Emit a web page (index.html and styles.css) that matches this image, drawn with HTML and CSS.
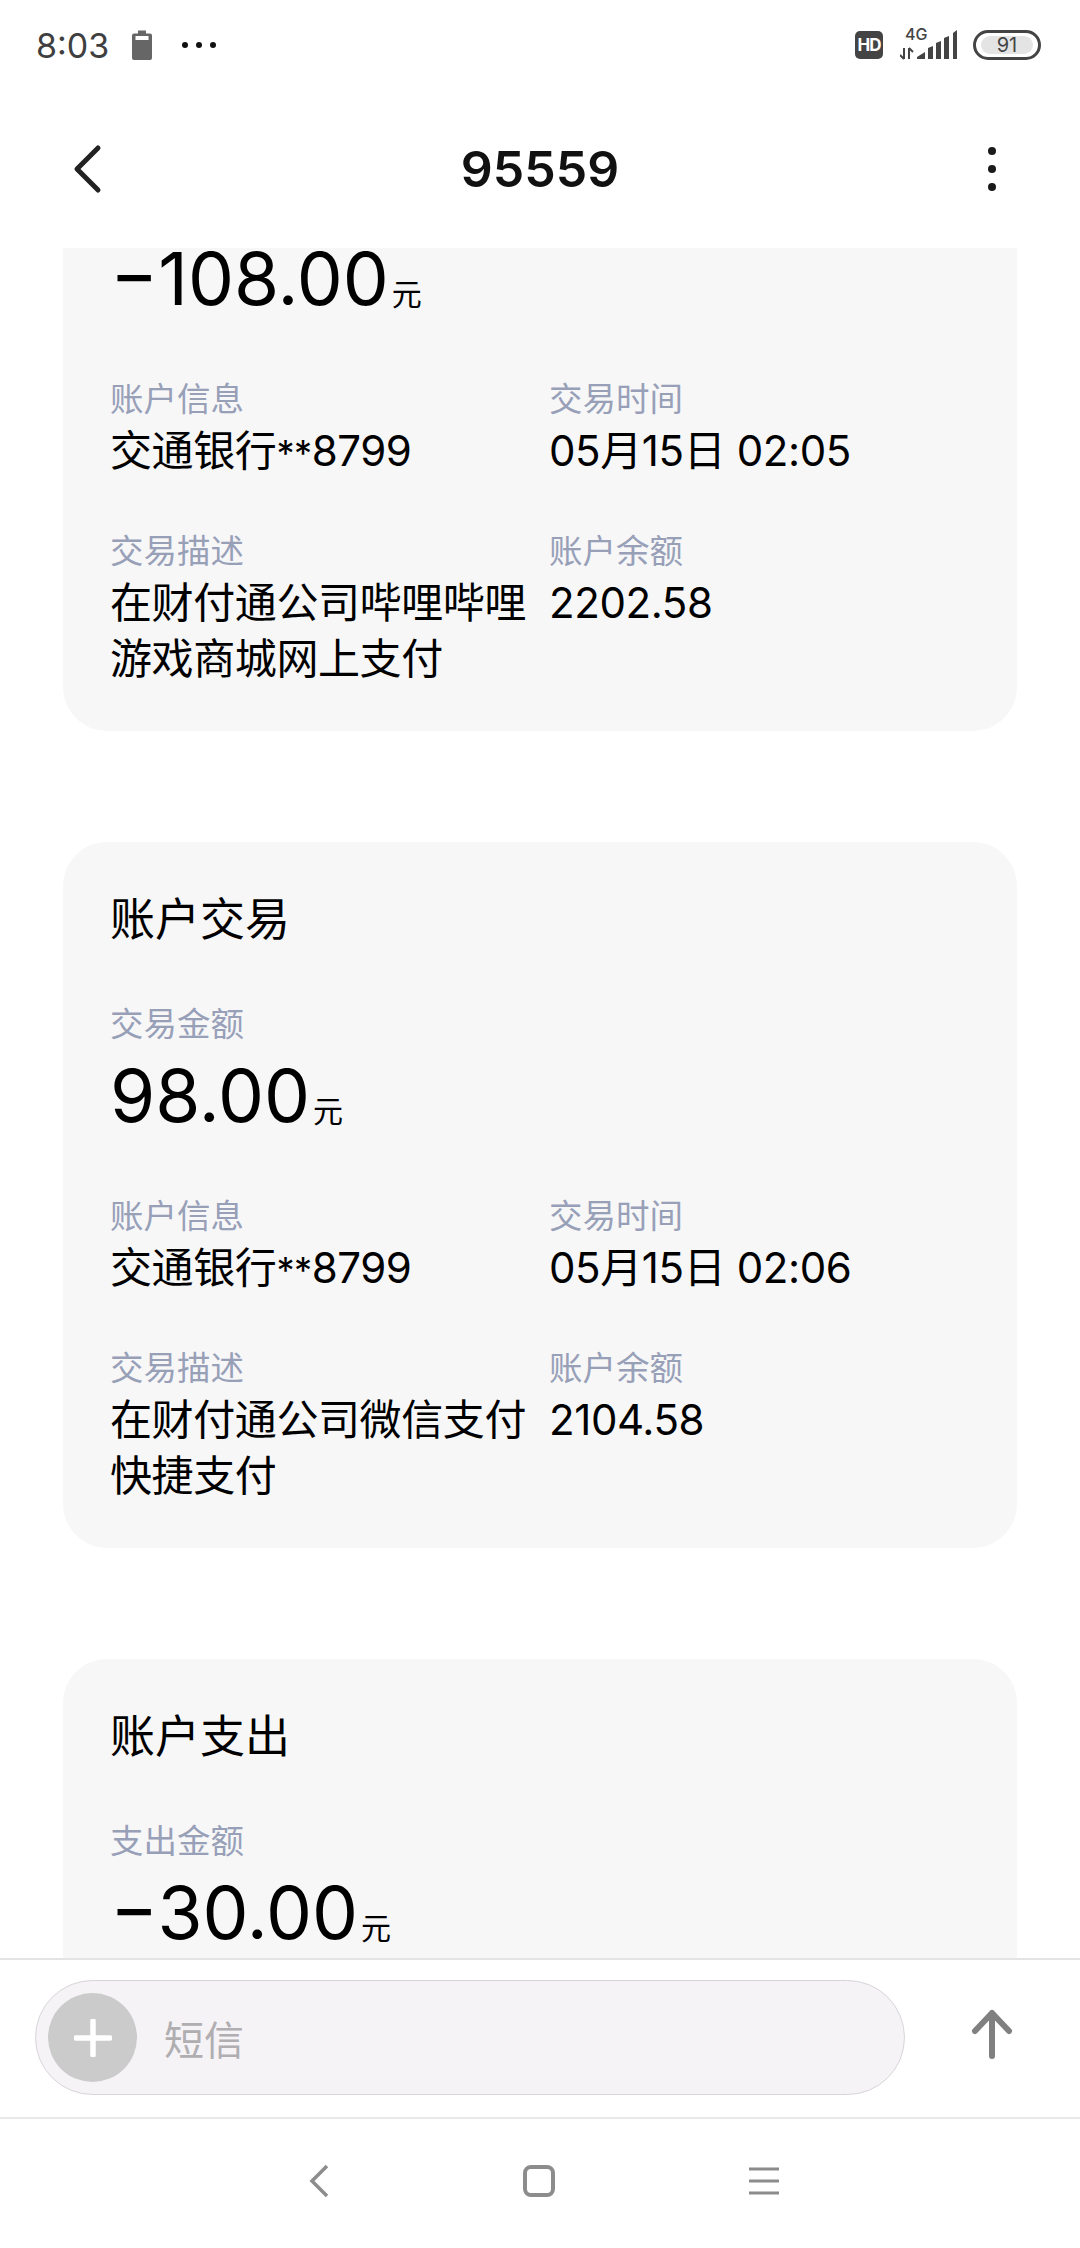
FILE: index.html
```html
<!DOCTYPE html>
<html>
  <head>
    <title>95559</title>
    <link rel="stylesheet" href="styles.css">
  </head>
  <body>
    <div class="app">
      <div class="statusbar">
        <div class="status-left">
          <span class="clock">8:03</span>
          <svg class="ic-charge" width="20" height="30" viewBox="0 0 20 30">
            <path d="M6 0.5h8v3h4a2 2 0 0 1 2 2V28a2 2 0 0 1-2 2H2a2 2 0 0 1-2-2V5.5a2 2 0 0 1 2-2h4z" fill="#666"/>
            <rect x="3.5" y="6" width="13" height="4" fill="#fff"/>
          </svg>
          <svg class="ic-more" width="36" height="8" viewBox="0 0 36 8">
            <circle cx="4" cy="4" r="3" fill="#111"/>
            <circle cx="18" cy="4" r="3" fill="#111"/>
            <circle cx="32" cy="4" r="3" fill="#111"/>
          </svg>
        </div>
        <div class="status-right">
          <span class="hd">HD</span>
          <svg class="ic-signal" width="58" height="42" viewBox="0 0 58 42">
            <text x="5" y="16" class="net">4G</text>
            <g transform="translate(0 5)">
              <path d="M4 19v11M4 30l-4-4M9 30V19M9 19l4 4" stroke="#444" stroke-width="2" fill="none"/>
              <path d="M17 30v-2l8-5v7zM28 30V19l5-2v13zM36 30V14l5-2v18zM44 30V9l5-2v23zM53 30V4l4-3v29z" fill="#444"/>
            </g>
          </svg>
          <span class="battery"><span class="battery-level">91</span></span>
        </div>
      </div>

      <div class="topbar">
        <svg class="ic-back" width="30" height="50" viewBox="0 0 30 50">
          <path d="M26 4 5 25l21 21" fill="none" stroke="#222" stroke-width="5" stroke-linecap="round" stroke-linejoin="round"/>
        </svg>
        <div class="title">95559</div>
        <svg class="ic-menu" width="10" height="46" viewBox="0 0 10 46">
          <circle cx="5" cy="5" r="4" fill="#1a1a1a"/>
          <circle cx="5" cy="23" r="4" fill="#1a1a1a"/>
          <circle cx="5" cy="41" r="4" fill="#1a1a1a"/>
        </svg>
      </div>

      <div class="messages">
        <div class="card card-first">
          <div class="amount">−108.00<span class="unit">元</span></div>
          <div class="details">
            <div>
              <div class="label">账户信息</div>
              <div class="value">交通银行<span class="mask">**</span>8799</div>
            </div>
            <div>
              <div class="label">交易时间</div>
              <div class="value">05月15日 02:05</div>
            </div>
            <div>
              <div class="label">交易描述</div>
              <div class="value">在财付通公司哔哩哔哩游戏商城网上支付</div>
            </div>
            <div>
              <div class="label">账户余额</div>
              <div class="value">2202.58</div>
            </div>
          </div>
        </div>

        <div class="card">
          <div class="card-title">账户交易</div>
          <div class="label amount-label">交易金额</div>
          <div class="amount">98.00<span class="unit">元</span></div>
          <div class="details">
            <div>
              <div class="label">账户信息</div>
              <div class="value">交通银行<span class="mask">**</span>8799</div>
            </div>
            <div>
              <div class="label">交易时间</div>
              <div class="value">05月15日 02:06</div>
            </div>
            <div>
              <div class="label">交易描述</div>
              <div class="value">在财付通公司微信支付快捷支付</div>
            </div>
            <div>
              <div class="label">账户余额</div>
              <div class="value">2104.58</div>
            </div>
          </div>
        </div>

        <div class="card card-last">
          <div class="card-title">账户支出</div>
          <div class="label amount-label">支出金额</div>
          <div class="amount">−30.00<span class="unit">元</span></div>
        </div>
      </div>

      <div class="composer">
        <div class="input">
          <span class="plus">
            <svg width="38" height="38" viewBox="0 0 38 38">
              <path d="M19 2v34M2 19h34" stroke="#fff" stroke-width="5.5" stroke-linecap="round"/>
            </svg>
          </span>
          <span class="placeholder">短信</span>
        </div>
        <svg class="ic-send" width="44" height="50" viewBox="0 0 44 50">
          <path d="M22 47V4M5 22 22 4l17 18" fill="none" stroke="#808080" stroke-width="6" stroke-linecap="round" stroke-linejoin="round"/>
        </svg>
      </div>

      <div class="navbar">
        <svg width="20" height="34" viewBox="0 0 20 34">
          <path d="M18 2 3 17l15 15" fill="none" stroke="#8c8c8c" stroke-width="3.5"/>
        </svg>
        <svg width="32" height="32" viewBox="0 0 32 32">
          <rect x="2" y="2" width="28" height="28" rx="6" fill="none" stroke="#8c8c8c" stroke-width="4"/>
        </svg>
        <svg width="30" height="28" viewBox="0 0 30 28">
          <path d="M0 2h30M0 14h30M0 26h30" fill="none" stroke="#8c8c8c" stroke-width="3"/>
        </svg>
      </div>
    </div>
  </body>
</html>
```

FILE: styles.css
```css
html, body {margin: 0; padding: 0; background: #fff;}
body {font-family: Inter, "Noto Sans CJK SC", sans-serif; color: #000;}

.app {width: 1080px; height: 2248px; display: flex; flex-direction: column; overflow: hidden;}

/* status bar */
.statusbar {height: 90px; flex: none; display: flex; justify-content: space-between; align-items: center; padding: 0 39px 0 36px; box-sizing: border-box;}
.status-left {display: flex; align-items: center;}
.status-right {display: flex; align-items: center;}
.clock {font-size: 34px; color: #3f3f3f; width: 96px;}
.ic-more {margin-left: 29px;}
.hd {width: 28px; height: 28px; border-radius: 5px; background: #444; color: #fff; font-size: 17px; font-weight: 700; text-align: center; line-height: 28px; letter-spacing: -1px;}
.ic-signal {margin-left: 17px;}
.net {font-size: 16px; font-weight: 500; fill: #444;}
.battery {margin-left: 15px; width: 68px; height: 30px; box-sizing: border-box; border: 3px solid #444; border-radius: 15px; padding: 3px 5px; display: flex;}
.battery-level {flex: 1; background: #e4e4e4; border-radius: 9px; font-size: 20px; line-height: 18px; text-align: center; color: #444;}

/* title bar */
.topbar {height: 158px; flex: none; display: grid; grid-template-columns: 1fr auto 1fr; align-items: center; padding: 0 72px; box-sizing: border-box;}
.title {font-size: 50px; font-weight: 600; color: #111;}
.ic-menu {justify-self: end; margin-right: 11px;}

/* messages */
.messages {flex: 1; min-height: 0; overflow: hidden;}
.card {margin: 0 63px 111px; padding: 44px 47px; background: #f7f7f8; border-radius: 44px;}
.card-first {margin-top: -223px; padding-top: 224px;}
.card-last {padding-bottom: 200px;}
.card-title {font-size: 45px; line-height: 68px;}
.label {font-size: 33.5px; line-height: 44px; color: #98a0b8;}
.amount-label {margin-top: 48px;}
.amount {font-size: 73px; line-height: 60px; margin-top: 20px;}
.card-first .amount {margin-top: 0;}
.unit {font-size: 30px; line-height: 1; margin-left: 3px;}
.details {display: grid; grid-template-columns: 439px 1fr; row-gap: 50px; margin-top: 68px;}
.value {font-size: 42px; line-height: 56px; margin-top: 2px; letter-spacing: -0.4px;}
.mask {font-size: 36px; line-height: 1;}

/* input */
.composer {height: 161px; flex: none; box-sizing: border-box; border-top: 2px solid #e4e4e6; border-bottom: 2px solid #e9e9eb; display: flex; align-items: center; padding: 0 0 2px 35px;}
.input {width: 870px; height: 115px; box-sizing: border-box; border: 1.5px solid #d8d5da; border-radius: 58px; background: #f6f3f7; display: flex; align-items: center; padding-left: 12px;}
.plus {width: 89px; height: 89px; border-radius: 50%; background: #cbcbcb; display: flex; align-items: center; justify-content: center;}
.placeholder {margin-left: 27px; font-size: 40px; color: #b0aeb1;}
.ic-send {margin: 0 0 7px 65px;}

/* bottom nav */
.navbar {height: 129px; flex: none; display: flex; justify-content: center; align-items: center; gap: 194px; padding: 0 0 6px 8px; box-sizing: border-box;}
```
